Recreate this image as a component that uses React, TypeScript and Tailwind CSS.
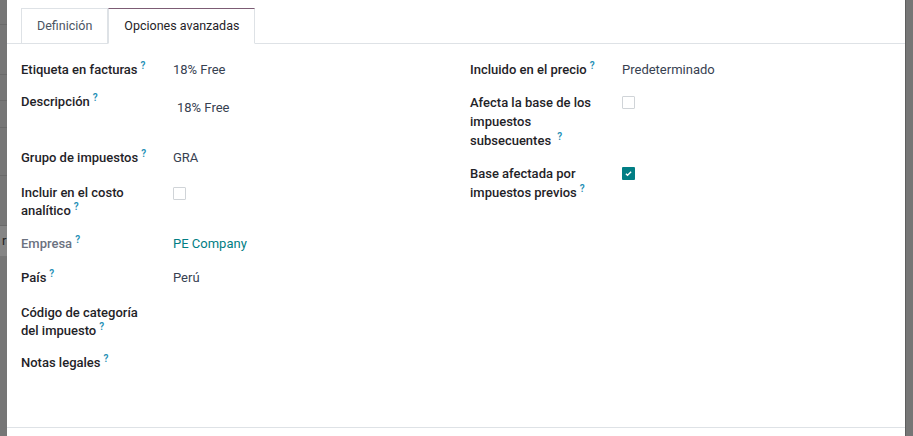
import * as React from 'react';

function Help() {
  return (
    <sup className="relative -top-[5px] ml-[3px] align-baseline text-[10px] leading-none font-semibold text-[#1f8fb5]">?</sup>
  );
}

function Checkbox({ checked }: { checked?: boolean }) {
  if (checked) {
    return (
      <span className="mt-[3px] flex h-[13px] w-[13px] items-center justify-center rounded-[1px] bg-[#017e84]">
        <svg viewBox="0 0 12 12" className="h-[9px] w-[9px]">
          <path d="M2.5 6.3l2.2 2.1 4.8-4.8" fill="none" stroke="white" strokeWidth="1.9" />
        </svg>
      </span>
    );
  }
  return <span className="mt-[3px] block h-[13px] w-[13px] rounded-[1px] border border-[#d0d4d8] bg-white" />;
}

interface RowProps {
  label: React.ReactNode;
  children?: React.ReactNode;
  muted?: boolean;
  className?: string;
}

function Row({ label, children, muted, className }: RowProps) {
  return (
    <div className={'flex pb-[14px] ' + (className ?? '')}>
      <div
        className={
          'w-[152px] shrink-0 pr-[18px] font-medium leading-[18px] ' +
          (muted ? 'text-[#6b7280]' : 'text-[#1f2328]')
        }
      >
        {label}
      </div>
      <div className="flex-1 leading-[18px] text-[#374151]">{children}</div>
    </div>
  );
}

export default function App() {
  return (
    <div
      className="flex h-[436px] w-[913px] overflow-hidden bg-[#767676] text-[13px]"
      style={{ fontFamily: 'Roboto, "Noto Sans", sans-serif' }}
    >
      {/* backdrop strip on the left */}
      <div className="flex w-[7px] shrink-0 flex-col">
        <div className="h-[25px] border-b border-[#6a6a6a]" />
        <div className="h-[50px] border-b border-[#6a6a6a]" />
        <div className="h-[26px] border-b border-[#6a6a6a]" />
        <div className="h-[27px] border-b border-[#6a6a6a]" />
        <div className="h-[48px] border-b border-[#6a6a6a]" />
        <div className="h-[50px] border-b border-[#6a6a6a]" />
        <div className="h-[30px] overflow-hidden bg-[#858585] pl-[2px] text-[13px] leading-[30px] text-[#222]">r</div>
      </div>

      <div className="flex w-[898px] shrink-0 flex-col bg-white">
        {/* tabs */}
        <div className="flex border-b border-[#dee2e6] px-[14px] pt-[8px] text-[12.5px]">
          <div className="-mb-px flex h-[36px] items-center border border-b-[#dee2e6] border-[#dee2e6] px-[15px] text-[#4b5563]">
            Definición
          </div>
          <div className="-mb-px flex h-[36px] items-center border border-[#dee2e6] border-t-[#7c5c74] border-b-white px-[15px] text-[#1f2328]">
            Opciones avanzadas
          </div>
        </div>

        {/* form */}
        <div className="grid flex-1 grid-cols-2 gap-x-[28px] px-[14px] pt-[17px]">
          <div className="flex flex-col">
            <Row label={<>Etiqueta en facturas<Help /></>}>18% Free</Row>
            <Row label={<>Descripción<Help /></>} className="h-[56px]">
              <div className="pl-[4px] pt-[6px]">18% Free</div>
            </Row>
            <Row label={<>Grupo de impuestos<Help /></>} className="pb-[17px]">GRA</Row>
            <Row label={<>Incluir en el costo analítico<Help /></>} className="pb-[15px]">
              <Checkbox />
            </Row>
            <Row label={<>Empresa<Help /></>} muted className="pb-[16px]">
              <span className="text-[#017e84]">PE Company</span>
            </Row>
            <Row label={<>País<Help /></>} className="pb-[17px]">Perú</Row>
            <Row label={<>Código de categoría del impuesto<Help /></>} className="pb-[14px]" />
            <Row label={<>Notas legales<Help /></>} />
          </div>

          <div className="flex flex-col">
            <Row label={<>Incluido en el precio<Help /></>}>Predeterminado</Row>
            <Row label={<span className="block leading-[19px]">Afecta la base de los impuestos subsecuentes <Help /></span>}>
              <Checkbox />
            </Row>
            <Row label={<span className="block leading-[19px]">Base afectada por impuestos previos<Help /></span>}>
              <Checkbox checked />
            </Row>
          </div>
        </div>

        <div className="h-[9px] border-t border-[#dee2e6]" />
      </div>

      <div className="w-[8px] shrink-0 border-l border-[#5e5e5e]" />
    </div>
  );
}
